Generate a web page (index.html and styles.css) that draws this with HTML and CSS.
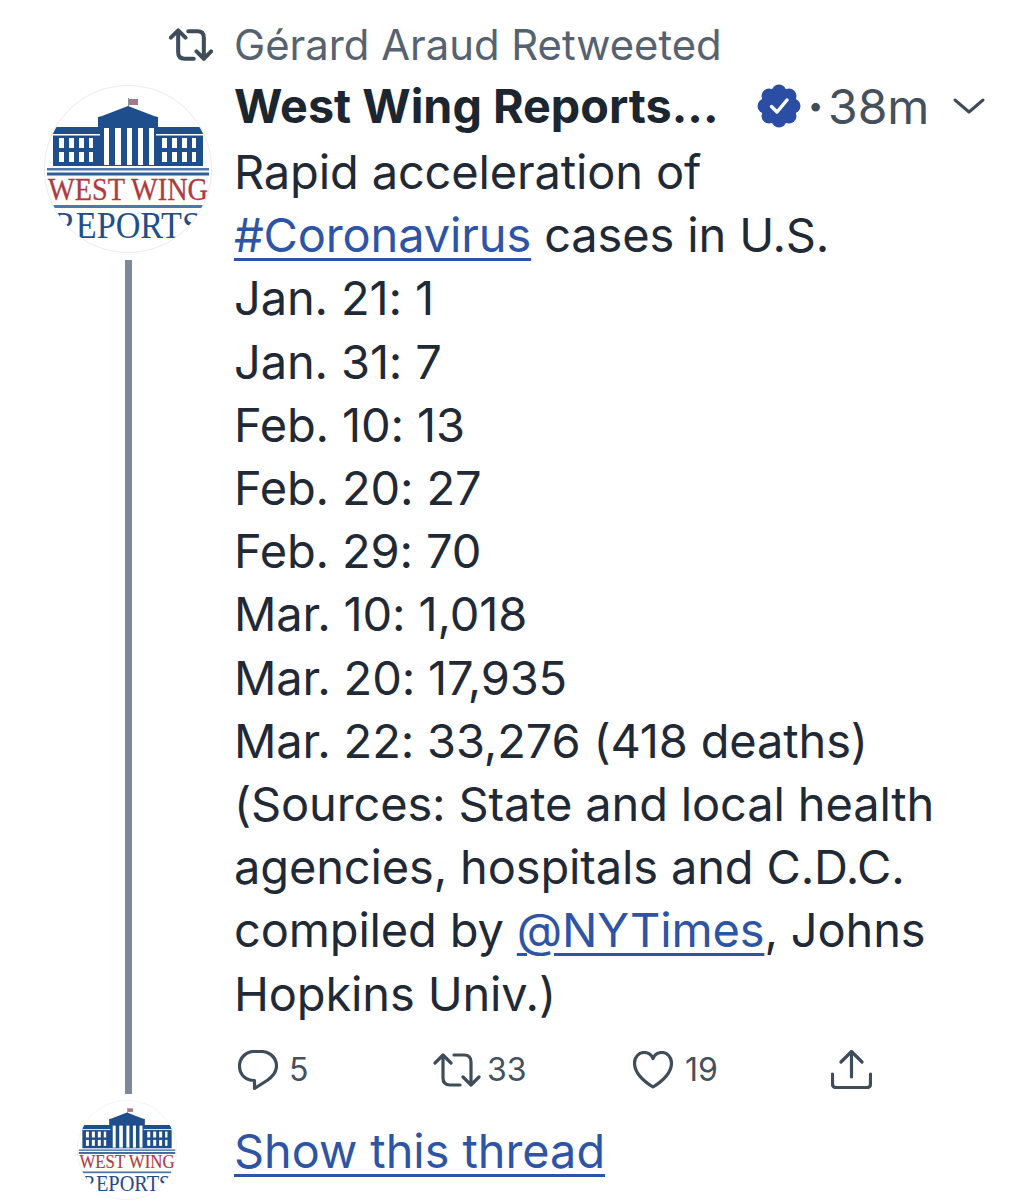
FILE: index.html
```html
<!DOCTYPE html>
<html lang="en">
<head>
<meta charset="utf-8">
<title>Tweet</title>
<link rel="stylesheet" href="styles.css">
</head>
<body>
<svg class="defs" width="0" height="0" aria-hidden="true">
  <defs>
    <clipPath id="disc"><circle cx="84" cy="84" r="83"/></clipPath>
    <symbol id="logo" viewBox="0 0 168 168">
      <circle cx="84" cy="84" r="83.5" fill="#fff" stroke="#ececec"/>
      <g clip-path="url(#disc)">
        <rect x="84" y="13" width="1" height="9" fill="#8a8f98"/>
        <rect x="85" y="14" width="9" height="6" fill="#a8788a"/>
        <path d="M84 21 L110 31 L114 32 L114 42 L159 42 L159 81 L9 81 L9 42 L54 42 L54 32 L58 31 Z" fill="#1f4e8c"/>
        <g fill="#fff">
          <rect x="9" y="49" width="47" height="1.5"/><rect x="112" y="49" width="47" height="1.5"/>
          <rect x="60" y="43" width="5" height="37"/><rect x="71" y="43" width="6" height="37"/><rect x="83" y="43" width="5" height="37"/><rect x="94" y="43" width="5" height="37"/><rect x="105" y="43" width="5" height="37"/>
          <rect x="15" y="53" width="5" height="10"/><rect x="25" y="53" width="5" height="10"/><rect x="35" y="53" width="5" height="10"/><rect x="45" y="53" width="4" height="10"/>
          <rect x="15" y="67" width="5" height="10"/><rect x="25" y="67" width="5" height="10"/><rect x="35" y="67" width="5" height="10"/><rect x="45" y="67" width="4" height="10"/>
          <rect x="118" y="53" width="5" height="10"/><rect x="128" y="53" width="5" height="10"/><rect x="138" y="53" width="5" height="10"/><rect x="148" y="53" width="4" height="10"/>
          <rect x="118" y="67" width="5" height="10"/><rect x="128" y="67" width="5" height="10"/><rect x="138" y="67" width="5" height="10"/><rect x="148" y="67" width="4" height="10"/>
        </g>
        <rect x="3" y="83" width="162" height="2.5" fill="#4d78a8"/>
        <rect x="3" y="87.5" width="162" height="3" fill="#2f5f98"/>
        <text x="84" y="115" class="logo-red" textLength="160" lengthAdjust="spacingAndGlyphs" text-anchor="middle">WEST WING</text>
        <rect x="3" y="120" width="162" height="3" fill="#4d78a8"/>
        <text x="83" y="153" class="logo-blue" textLength="148" lengthAdjust="spacingAndGlyphs" text-anchor="middle">REPORTS</text>
      </g>
    </symbol>
  </defs>
</svg>

<main class="tweet">
  <div class="retweet-row">
    <div class="gutter-end">
      <svg class="icon-rt-head" viewBox="0 0 48 36" aria-hidden="true"><path class="stroke-bold" d="M2 10 L10 2 L18 10 M10 3 V26 Q10 33 17 33 H27 M21 3 H31 Q38 3 38 10 V33 M30 25 L38 33 L46 25"/></svg>
    </div>
    <span class="retweet-label">Gérard Araud Retweeted</span>
  </div>

  <div class="main-row">
    <div class="rail">
      <svg class="avatar"><use href="#logo"/></svg>
      <div class="thread-line"></div>
    </div>
    <div class="content">
      <div class="meta">
        <span class="name">West Wing Reports...</span>
        <svg class="badge" viewBox="0 0 44 44" aria-hidden="true">
          <g fill="#2b4ea4"><circle cx="22" cy="22" r="16"/><circle cx="22" cy="8" r="7.5"/><circle cx="32" cy="12" r="7.5"/><circle cx="36" cy="22" r="7.5"/><circle cx="32" cy="32" r="7.5"/><circle cx="22" cy="36" r="7.5"/><circle cx="12" cy="32" r="7.5"/><circle cx="8" cy="22" r="7.5"/><circle cx="12" cy="12" r="7.5"/></g>
          <path d="M14.5 22.5 L20 28 L30 16" fill="none" stroke="#fff" stroke-width="3.4" stroke-linecap="round" stroke-linejoin="round"/>
        </svg>
        <span class="dot">·</span>
        <span class="time">38m</span>
        <svg class="chevron" viewBox="0 0 32 18" aria-hidden="true"><path class="stroke-thin" d="M2 3 L16 15 L30 3"/></svg>
      </div>
      <p class="body">Rapid acceleration of<br><a class="link" href="#">#Coronavirus</a> cases in U.S.<br>Jan. 21: 1<br>Jan. 31: 7<br>Feb. 10: 13<br>Feb. 20: 27<br>Feb. 29: 70<br>Mar. 10: 1,018<br>Mar. 20: 17,935<br>Mar. 22: 33,276 (418 deaths)<br>(Sources: State and local health<br>agencies, hospitals and C.D.C.<br>compiled by <a class="link" href="#">@NYTimes</a>, Johns<br>Hopkins Univ.)</p>
      <div class="actions">
        <div class="action">
          <svg class="icon-reply" viewBox="0 0 40 40" aria-hidden="true"><path class="stroke" d="M16 1.5 H23 C32 1.500 38.500 8 38.500 16 C38.500 23 34 27 29 30.500 L16.500 38.500 V30.500 C8 30.500 1.500 25 1.500 16 C1.500 8 8 1.500 16 1.500 Z"/></svg>
          <span class="count">5</span>
        </div>
        <div class="action">
          <svg class="icon-rt" viewBox="0 0 48 34" aria-hidden="true"><path class="stroke" d="M2 10 L10 2 L18 10 M10 3 V25 Q10 32 17 32 H27 M21 2 H31 Q38 2 38 9 V32 M30 24 L38 32 L46 24"/></svg>
          <span class="count">33</span>
        </div>
        <div class="action">
          <svg class="icon-heart" viewBox="0 0 40 38" aria-hidden="true"><path class="stroke" d="M20 36 C12 31 1.500 22 1.500 12 C1.500 6 6 1.500 11 1.500 C15 1.500 18.500 4 20 7.500 C21.500 4 25 1.500 29 1.500 C34 1.500 38.500 6 38.500 12 C38.500 22 28 31 20 36 Z"/></svg>
          <span class="count">19</span>
        </div>
        <div class="action">
          <svg class="icon-share" viewBox="0 0 41 39" aria-hidden="true"><path class="stroke" d="M20.500 27 V2 M10 12 L20.500 1.500 L31 12 M1.500 24 V34 Q1.500 37.500 5 37.500 H36 Q39.500 37.500 39.500 34 V24"/></svg>
        </div>
      </div>
    </div>
  </div>

  <div class="thread-row">
    <div class="rail-small"><svg class="avatar-small"><use href="#logo"/></svg></div>
    <a class="link thread-link" href="#">Show this thread</a>
  </div>
</main>
</body>
</html>
```

FILE: styles.css
```css
* { box-sizing: border-box; }
html, body { margin: 0; padding: 0; background: #fff; }
body { height: 1200px; overflow: hidden; font-family: Inter, "Open Sans", sans-serif; color: #1f2a36; }
.defs { position: absolute; }
.tweet { display: flex; flex-direction: column; padding-top: 22px; }

.retweet-row { display: flex; align-items: center; height: 46px; }
.gutter-end { width: 234px; display: flex; justify-content: flex-end; padding-right: 21px; }
.icon-rt-head { width: 44px; height: 34px; }
.retweet-label { font-size: 41.8px; color: #56626f; white-space: nowrap; }

.main-row { display: flex; height: 1032px; }
.rail { width: 234px; padding: 17px 0 0 44px; display: flex; flex-direction: column; }
.avatar { width: 168px; height: 168px; display: block; }
.thread-line { width: 7px; margin: 7px 0 0 81px; height: 834px; background: #7d8997; }
.content { flex: 1; }

.meta { display: flex; align-items: center; height: 72px; padding-top: 4px; }
.name { font-size: 46.7px; font-weight: 700; color: #1c2630; width: 523px; white-space: nowrap; }
.badge { width: 44px; height: 44px; }
.dot { font-size: 46px; font-weight: 800; color: #3e4b59; width: 27px; text-align: center; padding-left: 2px; }
.time { font-size: 48px; color: #44505e; width: 125px; }
.chevron { width: 32px; height: 18px; }

.body { margin: 0; font-size: 47px; line-height: 63.2px; white-space: nowrap; letter-spacing: -0.15px; }
.link { color: #2e54a5; text-decoration: underline; text-decoration-thickness: 2.5px; text-underline-offset: 6px; }

.actions { display: grid; grid-template-columns: 195px 200px 198px 50px; align-items: center; padding: 25px 0 0 4px; }
.action { display: flex; align-items: center; }
.count { font-size: 32px; color: #44505e; }
.icon-reply { width: 40px; height: 40px; margin-right: 11px; }
.icon-rt { width: 48px; height: 34px; margin-right: 6px; }
.icon-heart { width: 40px; height: 38px; margin-right: 12px; }
.icon-share { width: 41px; height: 39px; }

.stroke { fill: none; stroke: #3f4c5a; stroke-width: 3.2; stroke-linecap: round; stroke-linejoin: round; }
.stroke-bold { fill: none; stroke: #3f4c5a; stroke-width: 4.4; stroke-linecap: round; stroke-linejoin: round; }
.stroke-thin { fill: none; stroke: #3f4c5a; stroke-width: 3; stroke-linecap: round; stroke-linejoin: round; }

.thread-row { display: flex; align-items: center; height: 100px; }
.rail-small { width: 234px; padding-left: 77px; }
.avatar-small { width: 100px; height: 100px; display: block; }
.thread-link { font-size: 46.8px; margin-top: 2px; }

.logo-red { font-family: "Liberation Serif", serif; font-size: 31px; fill: #b03a3f; stroke: #b03a3f; stroke-width: 0.3; }
.logo-blue { font-family: "Liberation Serif", serif; font-size: 38px; fill: #1f4e8c; }
```
